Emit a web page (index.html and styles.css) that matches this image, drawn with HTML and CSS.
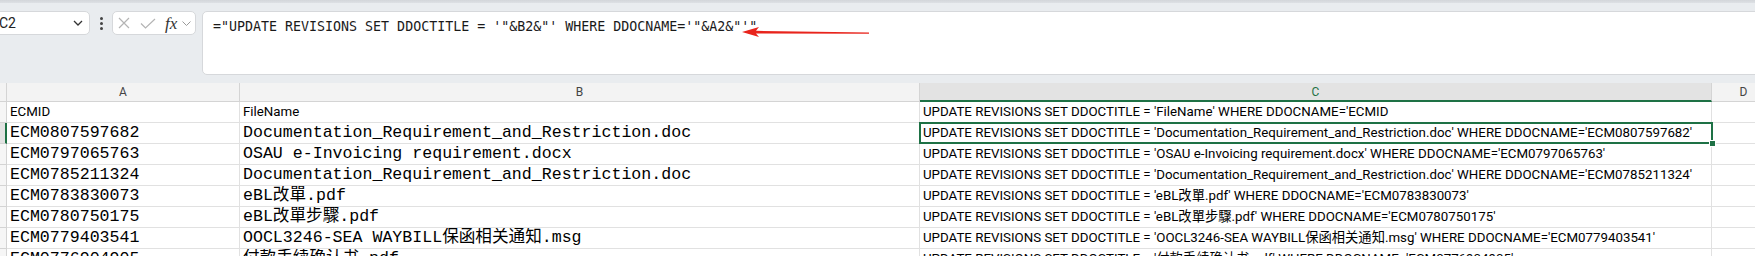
FILE: index.html
```html
<!DOCTYPE html>
<html lang="en">
<head>
    <meta charset="UTF-8">
    <meta name="viewport" content="width=device-width, initial-scale=1.0">
    <title>Sheet - Formula</title>
    <link rel="stylesheet" href="styles.css">
</head>
<body>
    <div class="top-strip"></div>

    <div class="toolbar">
        <div class="name-box">
            <span>C2</span>
            <svg width="10" height="6" viewBox="0 0 10 6"><path d="M1 1 L5 5 L9 1" fill="none" stroke="#333" stroke-width="1.3"/></svg>
        </div>
        <div class="dots"><i></i><i></i><i></i></div>
        <div class="fx-box">
            <svg class="icon-x" width="12" height="12" viewBox="0 0 12 12"><path d="M1 1 L11 11 M11 1 L1 11" stroke="#b4b4b4" stroke-width="1.2"/></svg>
            <svg class="icon-check" width="16" height="11" viewBox="0 0 16 11"><path d="M1 5.5 L5.5 10 L15 1" fill="none" stroke="#b4b4b4" stroke-width="1.2"/></svg>
            <span class="fx">fx</span>
            <svg class="icon-down" width="9" height="5" viewBox="0 0 9 5"><path d="M0.5 0.5 L4.5 4.5 L8.5 0.5" fill="none" stroke="#9a9a9a" stroke-width="1"/></svg>
        </div>
        <div class="formula">
            <span class="formula-text">="UPDATE REVISIONS SET DDOCTITLE = '"&amp;B2&amp;"' WHERE DDOCNAME='"&amp;A2&amp;"'"</span>
            <!-- red annotation arrow -->
            <svg class="arrow" width="128" height="12" viewBox="0 0 128 12"><path d="M0 6 L17 1 L14 4.8 L127 6.6 L127 7.8 L14 7.4 L17 11 Z" fill="#e8241c"/></svg>
        </div>
    </div>

    <div class="sheet">
        <div class="corner"></div>
        <div class="col-head">A</div>
        <div class="col-head">B</div>
        <div class="col-head active">C</div>
        <div class="col-head">D</div>

        <div class="row-head"></div>
        <div class="cell sans">ECMID</div>
        <div class="cell sans">FileName</div>
        <div class="cell sans">UPDATE REVISIONS SET DDOCTITLE = 'FileName' WHERE DDOCNAME='ECMID</div>
        <div class="cell"></div>

        <div class="row-head active"></div>
        <div class="cell mono">ECM0807597682</div>
        <div class="cell mono">Documentation_Requirement_and_Restriction.doc</div>
        <div class="cell sans selected">UPDATE REVISIONS SET DDOCTITLE = 'Documentation_Requirement_and_Restriction.doc' WHERE DDOCNAME='ECM0807597682'</div>
        <div class="cell"></div>

        <div class="row-head"></div>
        <div class="cell mono">ECM0797065763</div>
        <div class="cell mono">OSAU e-Invoicing requirement.docx</div>
        <div class="cell sans">UPDATE REVISIONS SET DDOCTITLE = 'OSAU e-Invoicing requirement.docx' WHERE DDOCNAME='ECM0797065763'</div>
        <div class="cell"></div>

        <div class="row-head"></div>
        <div class="cell mono">ECM0785211324</div>
        <div class="cell mono">Documentation_Requirement_and_Restriction.doc</div>
        <div class="cell sans">UPDATE REVISIONS SET DDOCTITLE = 'Documentation_Requirement_and_Restriction.doc' WHERE DDOCNAME='ECM0785211324'</div>
        <div class="cell"></div>

        <div class="row-head"></div>
        <div class="cell mono">ECM0783830073</div>
        <div class="cell mono">eBL改單.pdf</div>
        <div class="cell sans">UPDATE REVISIONS SET DDOCTITLE = 'eBL改單.pdf' WHERE DDOCNAME='ECM0783830073'</div>
        <div class="cell"></div>

        <div class="row-head"></div>
        <div class="cell mono">ECM0780750175</div>
        <div class="cell mono">eBL改單步驟.pdf</div>
        <div class="cell sans">UPDATE REVISIONS SET DDOCTITLE = 'eBL改單步驟.pdf' WHERE DDOCNAME='ECM0780750175'</div>
        <div class="cell"></div>

        <div class="row-head"></div>
        <div class="cell mono">ECM0779403541</div>
        <div class="cell mono">OOCL3246-SEA WAYBILL保函相关通知.msg</div>
        <div class="cell sans">UPDATE REVISIONS SET DDOCTITLE = 'OOCL3246-SEA WAYBILL保函相关通知.msg' WHERE DDOCNAME='ECM0779403541'</div>
        <div class="cell"></div>

        <div class="row-head"></div>
        <div class="cell mono">ECM0776904905</div>
        <div class="cell mono">付款手续确认书.pdf</div>
        <div class="cell sans">UPDATE REVISIONS SET DDOCTITLE = '付款手续确认书.pdf' WHERE DDOCNAME='ECM0776904905'</div>
        <div class="cell"></div>
    </div>
</body>
</html>
```

FILE: styles.css
```css
body {
    margin: 0;
    background-color: #e9ecef;
    font-family: Roboto, "Noto Sans CJK SC", sans-serif;
    overflow: hidden;
}

.top-strip {
    height: 3px;
    background: linear-gradient(#d3d6da, #dde0e4);
}

.toolbar {
    height: 80px;
    box-sizing: border-box;
    padding-top: 8px;
    display: flex;
    align-items: flex-start;
}

.name-box {
    width: 102px;
    height: 24px;
    margin-left: -12px;
    box-sizing: border-box;
    background-color: #fff;
    border: 1px solid #d6d8db;
    border-radius: 5px;
    display: flex;
    align-items: center;
    justify-content: space-between;
    padding: 0 6px 0 10px;
    font-size: 14px;
    color: #222;
}

.dots {
    width: 22px;
    height: 24px;
    display: flex;
    flex-direction: column;
    align-items: center;
    justify-content: center;
    gap: 2px;
}

.dots i {
    width: 3px;
    height: 3px;
    border-radius: 50%;
    background-color: #444;
}

.fx-box {
    width: 84px;
    height: 24px;
    box-sizing: border-box;
    background-color: #fff;
    border: 1px solid #d6d8db;
    border-radius: 5px;
    display: flex;
    align-items: center;
    padding-left: 5px;
}

.icon-check {
    margin-left: 10px;
}

.fx {
    margin-left: 9px;
    font-family: "Liberation Serif", serif;
    font-style: italic;
    font-size: 17px;
    color: #333;
    line-height: 1;
}

.icon-down {
    margin-left: 5px;
}

.formula {
    position: relative;
    flex: 1;
    height: 64px;
    margin-left: 6px;
    margin-right: -10px;
    box-sizing: border-box;
    background-color: #fff;
    border: 1px solid #d6d8db;
    border-radius: 5px;
    padding: 4px 10px;
}

.formula-text {
    font-family: "DejaVu Sans Mono", monospace;
    font-size: 13.3px;
    line-height: 16px;
    color: #1a1a1a;
}

.arrow {
    position: absolute;
    left: 539px;
    top: 14px;
}

.sheet {
    display: grid;
    grid-template-columns: 7px 233px 680px 792px 64px;
    grid-template-rows: 19px repeat(8, 21px);
    background-color: #fff;
    overflow: hidden;
}

.corner,
.col-head,
.row-head {
    box-sizing: border-box;
    background-color: #f3f3f3;
    border-right: 1px solid #d4d4d4;
    border-bottom: 1px solid #d4d4d4;
}

.col-head {
    font-size: 12px;
    color: #444;
    text-align: center;
    line-height: 18px;
}

.col-head.active {
    background-color: #e3e3e3;
    color: #1e7145;
    border-bottom: 2px solid #1e7145;
}

.row-head {
    background-color: #f6f6f6;
}

.row-head.active {
    background-color: #e3e3e3;
    border-right: 2px solid #1e7145;
}

.cell {
    box-sizing: border-box;
    border-right: 1px solid #e1e1e1;
    border-bottom: 1px solid #e1e1e1;
    padding: 0 3px 1px;
    white-space: nowrap;
    overflow: hidden;
    display: flex;
    align-items: flex-end;
    color: #000;
}

.cell.sans {
    font-size: 13.3px;
    line-height: 18px;
}

.cell.mono {
    font-family: "Liberation Mono", "Noto Sans CJK SC", monospace;
    font-size: 16.6px;
    line-height: 18px;
}

.cell.selected {
    position: relative;
    overflow: visible;
}

.cell.selected::after {
    content: "";
    position: absolute;
    left: -1px;
    top: -1px;
    right: -2px;
    bottom: -1px;
    border: 2px solid #1e7145;
}

.cell.selected::before {
    content: "";
    position: absolute;
    right: -5px;
    bottom: -4px;
    width: 5px;
    height: 5px;
    background-color: #1e7145;
    border: 1px solid #fff;
    z-index: 1;
}
```
